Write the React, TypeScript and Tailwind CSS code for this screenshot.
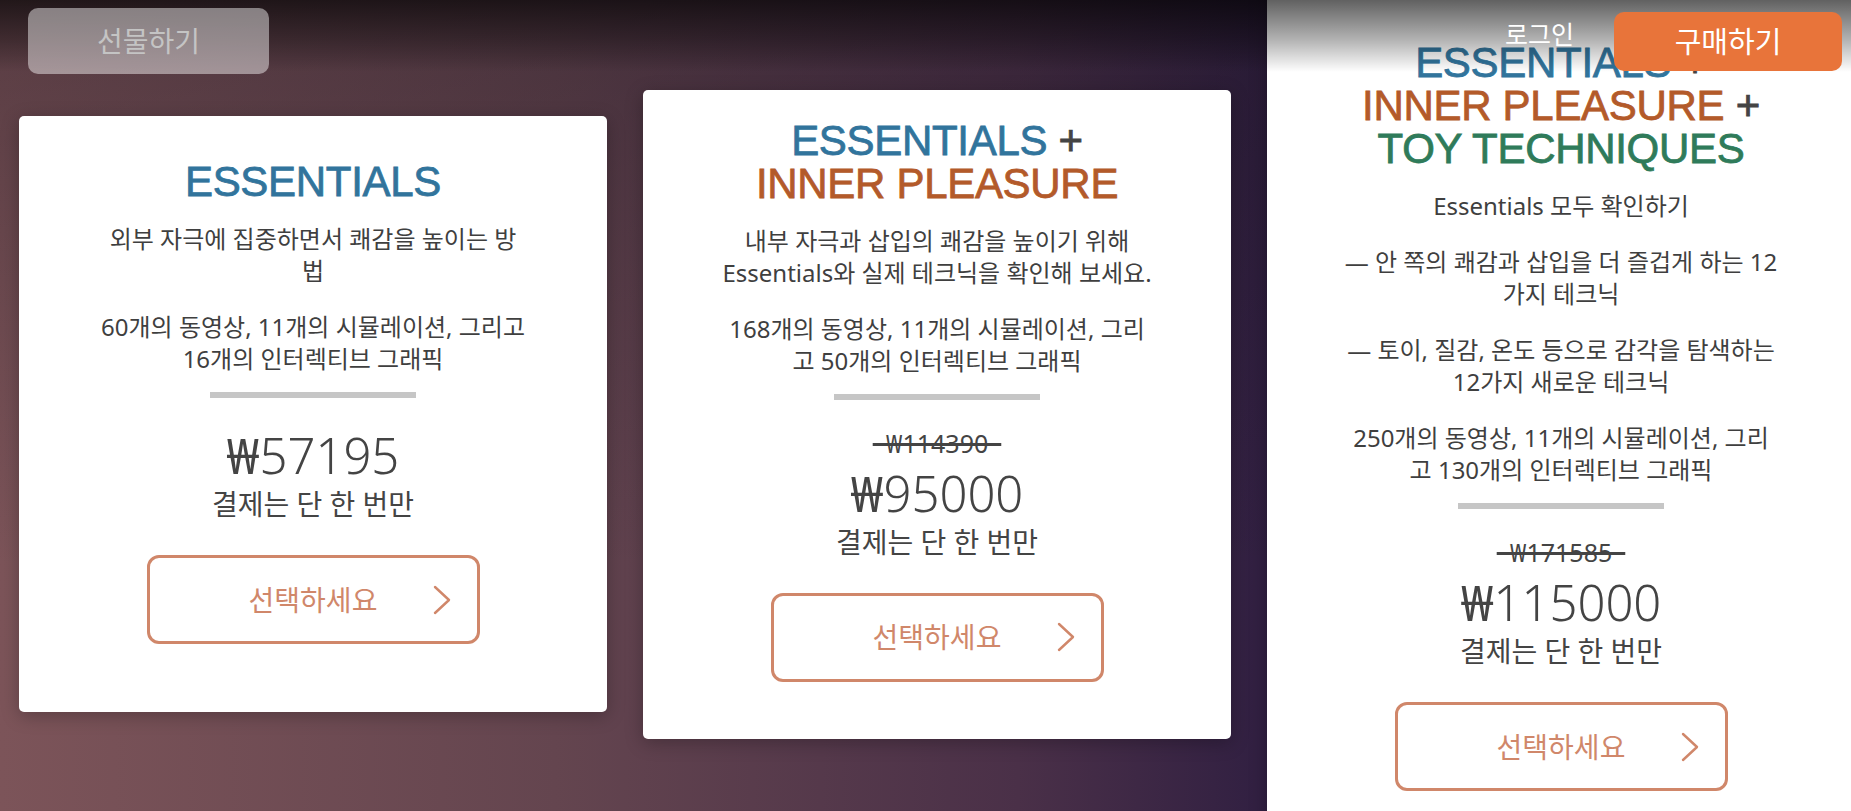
import React from 'react';

interface PlanCardProps {
  title: React.ReactNode;
  paragraphs: string[][];
  oldPrice?: string;
  price: string;
  spacing: string;
}

const Chevron: React.FC = () => (
  <svg width="20" height="30" viewBox="0 0 20 30" fill="none" className="absolute right-[25px] top-1/2 -translate-y-1/2">
    <polyline points="3,2 17,15 3,28" stroke="#d0876a" strokeWidth="2.4" strokeLinecap="round" strokeLinejoin="round" />
  </svg>
);

const PlanCard: React.FC<PlanCardProps> = ({ title, paragraphs, oldPrice, price, spacing }) => {
  return (
    <div className={`w-[588px] shrink-0 bg-white rounded-[5px] shadow-[0_4px_18px_rgba(0,0,0,0.25)] flex flex-col items-center ${spacing}`}>
      <h2 className="font-['Liberation_Sans',Arial,sans-serif] text-[42px] leading-[43px] text-center tracking-[-0.3px] [-webkit-text-stroke:0.8px_currentColor]">
        {title}
      </h2>

      <div className="mt-[20px] flex flex-col gap-[24px] text-center text-[24px] leading-[32px] text-[#3f3f3f]">
        {paragraphs.map((lines, i) => (
          <p key={i} className="whitespace-nowrap">
            {lines.map((line, j) => (
              <React.Fragment key={j}>
                {j > 0 && <br />}
                {line}
              </React.Fragment>
            ))}
          </p>
        ))}
      </div>

      <div className="mt-[17px] h-[6px] w-[206px] bg-[#c6c6c6]"></div>

      <div className="mt-[28px] flex flex-col items-center text-[#444]">
        {oldPrice && (
          <div className="text-[25px] leading-[30px] mb-[6px] line-through decoration-[#444] decoration-[2.5px]">
            {'\u00a0\u00a0' + oldPrice + '\u00a0\u00a0'}
          </div>
        )}
        <div className="text-[49px] leading-[58px] font-light">
          <span className="font-normal">₩</span>
          {price}
        </div>
        <div className="mt-[3px] text-[28px] leading-[34px]">결제는 단 한 번만</div>
      </div>

      <button className="relative mt-[34px] w-[333px] h-[89px] rounded-[12px] border-[3px] border-[#d0876a] text-[#d0876a] text-[28px] bg-white">
        선택하세요
        <Chevron />
      </button>
    </div>
  );
};

const App: React.FC = () => {
  return (
    <div className="relative w-full h-[811px] overflow-hidden font-['Noto_Sans','Noto_Sans_CJK_KR',sans-serif] bg-[linear-gradient(180deg,rgba(22,16,26,0.35)_0%,rgba(22,16,26,0.15)_40%,rgba(22,16,26,0)_70%),linear-gradient(90deg,#7c5459_0%,#64454f_30%,#4a3048_55%,#2a1b40_72%,#1f1538_100%)]">
      {/* cards */}
      <div className="flex items-center gap-[36px] pl-[19px] pt-[17px] h-full">
        <PlanCard
          spacing="pt-[44px] pb-[68px]"
          title={<span className="text-[#31749c]">ESSENTIALS</span>}
          paragraphs={[
            ['외부 자극에 집중하면서 쾌감을 높이는 방', '법'],
            ['60개의 동영상, 11개의 시뮬레이션, 그리고', '16개의 인터렉티브 그래픽'],
          ]}
          price="57195"
        />
        <PlanCard
          spacing="pt-[29px] pb-[57px]"
          title={
            <>
              <span className="text-[#31749c]">ESSENTIALS</span> <span className="text-[#444]">+</span>
              <br />
              <span className="text-[#b35a2a]">INNER PLEASURE</span>
            </>
          }
          paragraphs={[
            ['내부 자극과 삽입의 쾌감을 높이기 위해', 'Essentials와 실제 테크닉을 확인해 보세요.'],
            ['168개의 동영상, 11개의 시뮬레이션, 그리', '고 50개의 인터렉티브 그래픽'],
          ]}
          oldPrice="₩114390"
          price="95000"
        />
        <PlanCard
          spacing="pt-[60px] pb-[56px]"
          title={
            <>
              <span className="text-[#31749c]">ESSENTIALS</span> <span className="text-[#444]">+</span>
              <br />
              <span className="text-[#b35a2a]">INNER PLEASURE</span> <span className="text-[#444]">+</span>
              <br />
              <span className="text-[#2f7b5a]">TOY TECHNIQUES</span>
            </>
          }
          paragraphs={[
            ['Essentials 모두 확인하기'],
            ['— 안 쪽의 쾌감과 삽입을 더 즐겁게 하는 12', '가지 테크닉'],
            ['— 토이, 질감, 온도 등으로 감각을 탐색하는', '12가지 새로운 테크닉'],
            ['250개의 동영상, 11개의 시뮬레이션, 그리', '고 130개의 인터렉티브 그래픽'],
          ]}
          oldPrice="₩171585"
          price="115000"
        />
      </div>

      {/* header */}
      <div className="absolute inset-x-0 top-0 h-[72px] bg-[linear-gradient(180deg,rgba(0,0,0,0.62)_0%,rgba(0,0,0,0.3)_55%,rgba(0,0,0,0)_100%)]">
        <button className="absolute left-[28px] top-[8px] w-[241px] h-[66px] rounded-[10px] bg-white/45 text-[#c4c4c4] text-[28px]">
          선물하기
        </button>
        <span className="absolute left-[1505px] top-[18px] text-white text-[25px] leading-[32px]">로그인</span>
        <button className="absolute left-[1614px] top-[12px] w-[228px] h-[59px] rounded-[10px] bg-[#e8743a] text-white text-[29px]">
          구매하기
        </button>
      </div>
    </div>
  );
};

export default App;
